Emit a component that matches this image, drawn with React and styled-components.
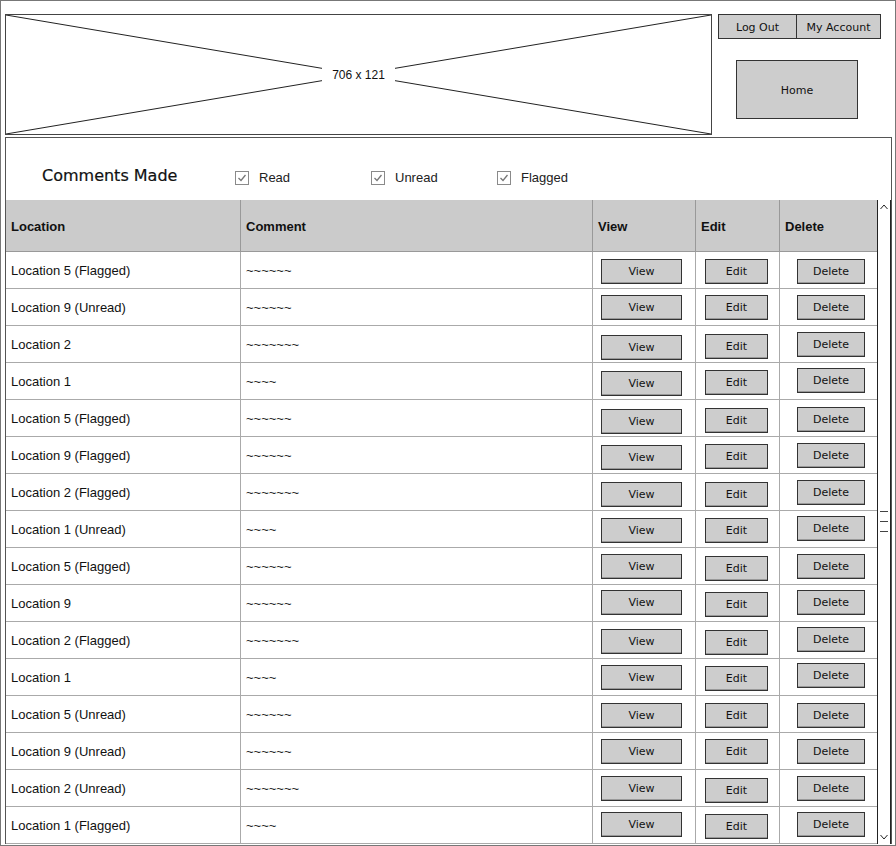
import React from 'react';
import styled, { createGlobalStyle } from 'styled-components';

const GlobalStyle = createGlobalStyle`
  * { box-sizing: border-box; }
  body {
    margin: 0;
    background: #fff;
    font-family: "Liberation Sans", Arial, sans-serif;
    color: #222;
  }
`;

const sketchFont = `"DejaVu Sans", "Liberation Sans", sans-serif`;

const Page = styled.div`
  width: 896px;
  height: 846px;
  border: 1px solid #777;
  padding: 13px 0 0 4px;
  overflow: hidden;
`;

const TopBar = styled.div`
  display: flex;
  gap: 6px;
`;

const Placeholder = styled.div`
  position: relative;
  width: 707px;
  height: 121px;
  border: 1px solid #444;
  display: flex;
  align-items: center;
  justify-content: center;
`;

const Cross = styled.svg`
  position: absolute;
  inset: 0;
  width: 100%;
  height: 100%;
`;

const PlaceholderLabel = styled.span`
  position: relative;
  background: #fff;
  padding: 2px 10px;
  font-size: 12px;
  color: #111;
`;

const SideColumn = styled.div`
  display: flex;
  flex-direction: column;
  align-items: flex-start;
`;

const ButtonGroup = styled.div`
  display: flex;
`;

const NavButton = styled.div`
  width: ${p => p.$w}px;
  height: 25px;
  background: #cdcdcd;
  border: 1px solid #333;
  margin-left: ${p => (p.$joined ? '-1px' : '0')};
  display: flex;
  align-items: center;
  justify-content: center;
  padding-top: 1px;
  font-family: ${sketchFont};
  font-size: 11px;
  color: #111;
`;

const HomeButton = styled.div`
  width: 122px;
  height: 59px;
  margin: 21px 0 0 18px;
  background: #cdcdcd;
  border: 1px solid #333;
  display: flex;
  align-items: center;
  justify-content: center;
  padding-top: 2px;
  font-family: ${sketchFont};
  font-size: 11px;
  color: #111;
`;

const Panel = styled.div`
  width: 887px;
  margin-top: 2px;
  border: 1px solid #555;
  border-bottom: none;
`;

const PanelHeader = styled.div`
  height: 62px;
  display: flex;
  align-items: center;
  padding: 17px 0 0 36px;
`;

const Title = styled.div`
  width: 193px;
  font-family: ${sketchFont};
  font-size: 16px;
  color: #111;
  margin-top: -4px;
  -webkit-text-stroke: 0.2px #111;
`;

const Filter = styled.label`
  width: ${p => p.$w}px;
  display: flex;
  align-items: center;
  gap: 10px;
  font-size: 13px;
  color: #222;
`;

const Body = styled.div`
  display: flex;
`;

const Table = styled.div`
  width: 871px;
`;

const cols = '235px 352px 103px 84px 97px';

const HeadRow = styled.div`
  display: grid;
  grid-template-columns: ${cols};
  height: 52px;
  background: #cbcbcb;
  border-bottom: 1px solid #999;
`;

const HeadCell = styled.div`
  display: flex;
  align-items: center;
  padding: 1px 5px 0;
  font-weight: bold;
  font-size: 13px;
  color: #111;
  border-right: ${p => (p.$last ? 'none' : '1px solid #999')};
`;

const Row = styled.div`
  display: grid;
  grid-template-columns: ${cols};
  height: 37px;
  border-bottom: 1px solid #aaa;
`;

const Cell = styled.div`
  display: flex;
  align-items: center;
  padding-left: ${p => p.$pl ?? 5}px;
  font-size: 13px;
  color: #111;
  border-right: ${p => (p.$last ? 'none' : '1px solid #aaa')};
`;

const Tilde = styled.span`
  font-size: 13px;
  color: #222;
`;

const RowButton = styled.div`
  width: ${p => p.$w}px;
  height: 25px;
  margin-top: ${p => p.$dy * 2}px;
  background: #cdcdcd;
  border: 1px solid #333;
  box-shadow: inset 0 -1px 0 #999;
  display: flex;
  align-items: center;
  justify-content: center;
  font-family: ${sketchFont};
  font-size: 11px;
  color: #111;
`;

const Scrollbar = styled.div`
  width: 14px;
  border-left: 1px solid #222;
  border-right: 1px solid #222;
  display: flex;
  flex-direction: column;
  align-items: center;
  justify-content: space-between;
  padding: 4px 0 4px;
`;

const Grip = styled.div`
  display: flex;
  flex-direction: column;
  gap: 9px;
  margin-top: -1px;
  align-self: flex-start;
  margin-left: 2px;
`;

const GripLine = styled.div`
  width: 8px;
  height: 1px;
  background: #444;
`;

const Check = () => (
  <svg width="14" height="14" viewBox="0 0 14 14">
    <rect x="0.5" y="0.5" width="13" height="13" fill="#fff" stroke="#8a8a8a" />
    <path d="M3.5 7 L6 9.5 L10.5 4" fill="none" stroke="#777" strokeWidth="1.3" />
  </svg>
);

const Chevron = ({ down }) => (
  <svg width="8" height="6" viewBox="0 0 8 6">
    <path
      d={down ? 'M0.5 1 L4 5 L7.5 1' : 'M0.5 5 L4 1 L7.5 5'}
      fill="none"
      stroke="#222"
      strokeWidth="1"
    />
  </svg>
);

const rows = [
  ['Location 5 (Flagged)', 6, [1, 1, 1]],
  ['Location 9 (Unread)', 6, [0, 0, 0]],
  ['Location 2', 7, [3, 2, 0]],
  ['Location 1', 4, [2, 1, -1]],
  ['Location 5 (Flagged)', 6, [3, 2, 1]],
  ['Location 9 (Flagged)', 6, [2, 1, 0]],
  ['Location 2 (Flagged)', 7, [2, 2, 0]],
  ['Location 1 (Unread)', 4, [1, 1, -1]],
  ['Location 5 (Flagged)', 6, [0, 2, 0]],
  ['Location 9', 6, [-1, 1, -1]],
  ['Location 2 (Flagged)', 7, [1, 2, -1]],
  ['Location 1', 4, [0, 1, -2]],
  ['Location 5 (Unread)', 6, [1, 1, 1]],
  ['Location 9 (Unread)', 6, [0, 0, 0]],
  ['Location 2 (Unread)', 7, [0, 2, 0]],
  ['Location 1 (Flagged)', 4, [-1, 1, -1]],
];

const App = () => (
  <>
    <GlobalStyle />
    <Page>
      <TopBar>
        <Placeholder>
          <Cross viewBox="0 0 705 119" preserveAspectRatio="none">
            <line x1="0" y1="0" x2="705" y2="119" stroke="#222" strokeWidth="1" />
            <line x1="705" y1="0" x2="0" y2="119" stroke="#222" strokeWidth="1" />
          </Cross>
          <PlaceholderLabel>706 x 121</PlaceholderLabel>
        </Placeholder>
        <SideColumn>
          <ButtonGroup>
            <NavButton $w={79}>Log Out</NavButton>
            <NavButton $w={85} $joined>My Account</NavButton>
          </ButtonGroup>
          <HomeButton>Home</HomeButton>
        </SideColumn>
      </TopBar>

      <Panel>
        <PanelHeader>
          <Title>Comments Made</Title>
          <Filter $w={136}><Check />Read</Filter>
          <Filter $w={126}><Check />Unread</Filter>
          <Filter $w={120}><Check />Flagged</Filter>
        </PanelHeader>

        <Body>
          <Table>
            <HeadRow>
              <HeadCell>Location</HeadCell>
              <HeadCell>Comment</HeadCell>
              <HeadCell>View</HeadCell>
              <HeadCell>Edit</HeadCell>
              <HeadCell $last>Delete</HeadCell>
            </HeadRow>
            {rows.map(([loc, n, dy], i) => (
              <Row key={i}>
                <Cell>{loc}</Cell>
                <Cell><Tilde>{'~'.repeat(n)}</Tilde></Cell>
                <Cell $pl={8}><RowButton $w={81} $dy={dy[0]}>View</RowButton></Cell>
                <Cell $pl={9}><RowButton $w={63} $dy={dy[1]}>Edit</RowButton></Cell>
                <Cell $pl={17} $last><RowButton $w={68} $dy={dy[2]}>Delete</RowButton></Cell>
              </Row>
            ))}
          </Table>
          <Scrollbar>
            <Chevron />
            <Grip>
              <GripLine />
              <GripLine />
              <GripLine />
            </Grip>
            <Chevron down />
          </Scrollbar>
        </Body>
      </Panel>
    </Page>
  </>
);

export default App;
